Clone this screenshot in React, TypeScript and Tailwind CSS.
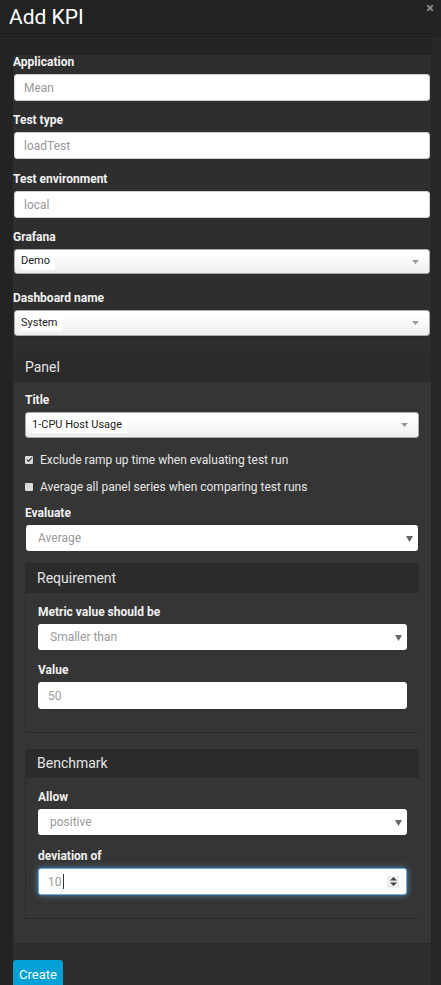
import React from 'react';

const font = { fontFamily: 'Roboto, "Liberation Sans", Arial, sans-serif' };

function Label({ children }: { children: React.ReactNode }) {
  return <div className="mb-1 text-[12px] font-bold leading-[15px] text-[#f2f2f2]">{children}</div>;
}

function TextInput({ value, className = '' }: { value: string; className?: string }) {
  return (
    <div
      className={`flex h-[27px] items-center rounded-[3px] border border-[#cfcfcf] bg-white px-[9px] text-[12px] text-[#999] ${className}`}
    >
      {value}
    </div>
  );
}

// chosen-style dropdown with gradient background
function ChosenSelect({ value, className = '' }: { value: string; className?: string }) {
  return (
    <div
      className={`flex items-center justify-between rounded-[3px] border border-[#aaa] bg-gradient-to-b from-white from-20% to-[#eeeeee] pl-[6px] pr-[10px] text-[11px] text-[#222] shadow-[0_1px_0_rgba(0,0,0,0.1)] ${className}`}
    >
      <span className="bg-white pr-[5px]">{value}</span>
      <svg width="7" height="4" viewBox="0 0 7 4">
        <path d="M0 0h7L3.5 4z" fill="#999" />
      </svg>
    </div>
  );
}

// plain native select look
function PlainSelect({ value, className = '' }: { value: string; className?: string }) {
  return (
    <div
      className={`flex h-[26px] items-center justify-between rounded-[3px] bg-white pl-[12px] pr-[5px] text-[12px] text-[#999] ${className}`}
    >
      <span>{value}</span>
      <svg width="7" height="7" viewBox="0 0 7 7">
        <path d="M0 1h7L3.5 7z" fill="#666" />
      </svg>
    </div>
  );
}

function Checkbox({ checked, label }: { checked?: boolean; label: string }) {
  return (
    <div className="flex h-[15px] items-center gap-[7px] text-[12px] text-[#e6e6e6]">
      <span className="flex h-[8px] w-[8px] items-center justify-center rounded-[1px] bg-[#d9d9d9]">
        {checked && (
          <svg width="7" height="7" viewBox="0 0 7 7">
            <path d="M1 3.6l1.6 1.6L6 1.6" fill="none" stroke="#444" strokeWidth="1.3" />
          </svg>
        )}
      </span>
      <span>{label}</span>
    </div>
  );
}

export default function App() {
  return (
    <div className="min-h-[985px] w-[441px] overflow-hidden bg-[#232323]" style={font}>
      <header className="relative h-[39px] border-b border-[#2c2c2c] bg-[#222222] pl-[9px]">
        <h1 className="pt-[3px] text-[21px] leading-[28px] text-white">Add KPI</h1>
        <span className="absolute right-[7px] top-[1px] text-[15px] font-bold leading-[15px] text-[#8a8a8a]">×</span>
      </header>

      <div className="flex">
        <div className="ml-[13px] mt-[16px] w-[418px] bg-[#2e2e2e]">
          <Label>Application</Label>
          <TextInput value="Mean" className="mx-px mb-[12px]" />
          <Label>Test type</Label>
          <TextInput value="loadTest" className="mx-px mb-[13px]" />
          <Label>Test environment</Label>
          <TextInput value="local" className="mx-px mb-[12px]" />
          <Label>Grafana</Label>
          <ChosenSelect value="Demo" className="mx-px mb-[17px] h-[25px]" />
          <Label>Dashboard name</Label>
          <ChosenSelect value="System" className="mx-px mb-[17px] h-[26px]" />

          <section className="ml-px border-b border-[#2a2a2a]">
            <div className="flex h-[29px] items-center rounded-t-[3px] bg-[#2b2b2b] pl-[11px] text-[14px] text-[#e4e4e4]">
              Panel
            </div>
            <div className="bg-[#353535] pb-[24px] pl-[11px] pr-[12px] pt-[11px]">
              <Label>Title</Label>
              <ChosenSelect value="1-CPU Host Usage" className="mb-[14px] h-[26px]" />
              <div className="mb-[12px] flex flex-col gap-[12px]">
                <Checkbox checked label="Exclude ramp up time when evaluating test run" />
                <Checkbox label="Average all panel series when comparing test runs" />
              </div>
              <Label>Evaluate</Label>
              <PlainSelect value="Average" className="mx-px mb-[12px]" />

              <div className="mb-[16px]">
                <div className="flex h-[30px] items-center rounded-t-[3px] bg-[#2b2b2b] pl-[12px] text-[14px] text-[#e4e4e4]">
                  Requirement
                </div>
                <div className="border-b border-l border-[#2a2a2a] pb-[23px] pl-[12px] pr-[12px] pt-[12px]">
                  <Label>Metric value should be</Label>
                  <PlainSelect value="Smaller than" className="mb-[13px]" />
                  <Label>Value</Label>
                  <TextInput value="50" className="border-white" />
                </div>
              </div>

              <div>
                <div className="flex h-[29px] items-center rounded-t-[3px] bg-[#2b2b2b] pl-[12px] text-[14px] text-[#e4e4e4]">
                  Benchmark
                </div>
                <div className="border-b border-l border-[#2a2a2a] pb-[23px] pl-[12px] pr-[12px] pt-[12px]">
                  <Label>Allow</Label>
                  <PlainSelect value="positive" className="mb-[14px]" />
                  <Label>deviation of</Label>
                  <div className="flex h-[27px] items-center justify-between rounded-[3px] border border-[#66afe9] bg-white pl-[9px] pr-[7px] text-[12px] text-[#999] shadow-[0_0_6px_rgba(102,175,233,0.7)]">
                    <span className="flex items-center">
                      10<span className="ml-px h-[15px] w-px bg-[#333]" />
                    </span>
                    <span className="flex h-[12px] w-[12px] items-center justify-center bg-[#ececec]">
                      <svg width="7" height="9" viewBox="0 0 7 9">
                        <path d="M0 3.5L3.5 0 7 3.5z M0 5.5h7L3.5 9z" fill="#444" />
                      </svg>
                    </span>
                  </div>
                </div>
              </div>
            </div>
          </section>

          <div className="pt-[16px]">
            <button
              type="button"
              className="h-[30px] w-[50px] rounded-t-[3px] bg-[#03a0d6] text-[13px] text-white"
            >
              Create
            </button>
          </div>
        </div>
        <div className="w-[10px] bg-[#262626]" />
      </div>
    </div>
  );
}
